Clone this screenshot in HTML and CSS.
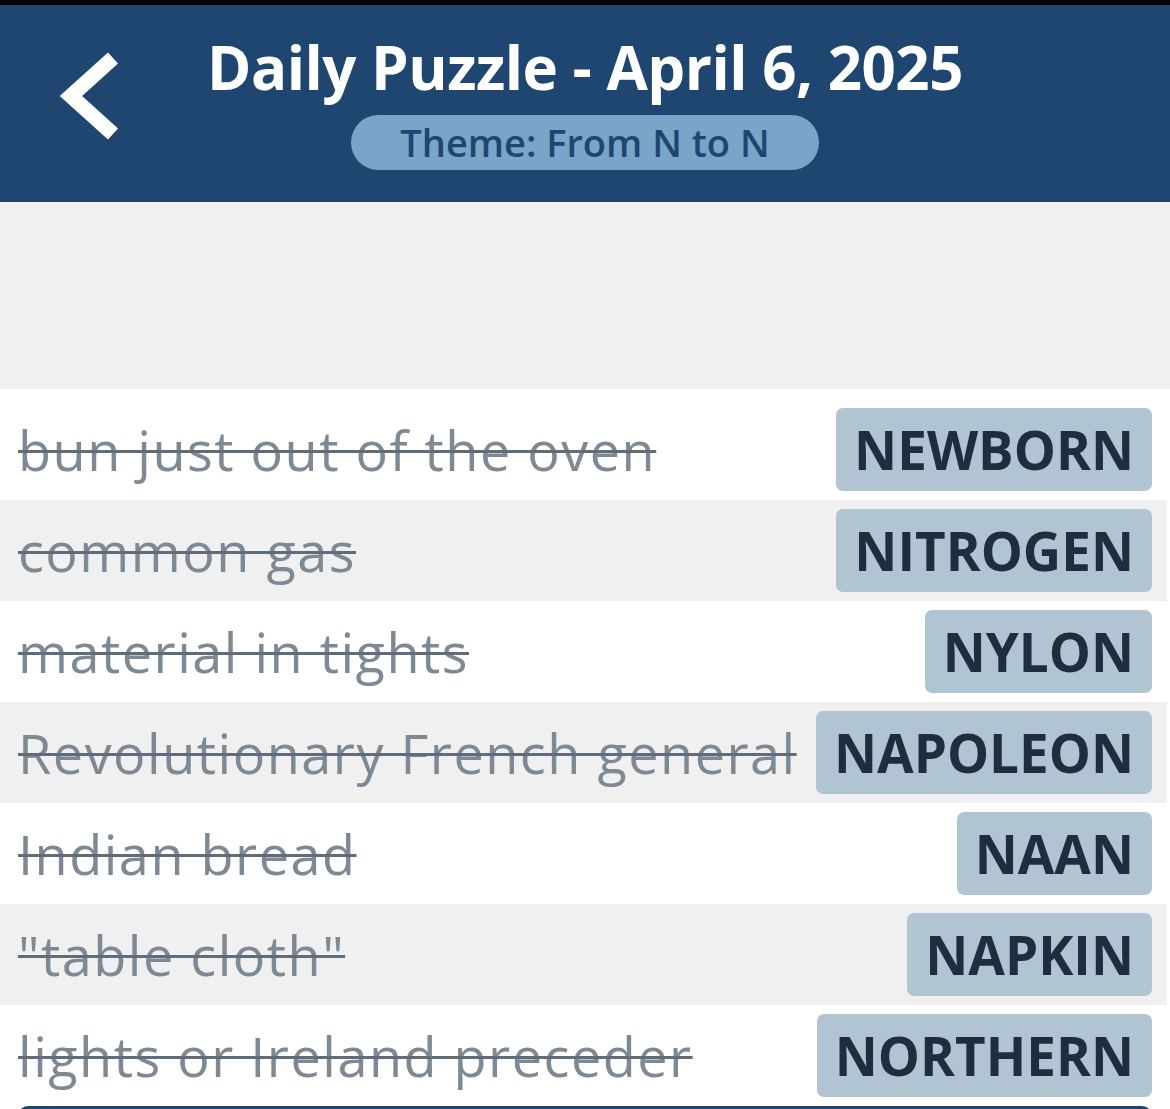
FILE: index.html
```html
<!DOCTYPE html>
<html lang="en">
<head>
<meta charset="UTF-8" />
<meta name="viewport" content="width=device-width, initial-scale=1" />
<title>Daily Puzzle - April 6, 2025</title>
<link rel="stylesheet" href="styles.css">
</head>
<body>
  <div class="status-bar"></div>
  <header class="top-bar">
    <button class="back-btn" aria-label="Back">
      <svg width="60" height="90" viewBox="0 0 60 90">
        <polyline points="53,7 11,45 53,83" fill="none" stroke="#fff" stroke-width="15" stroke-linejoin="miter" />
      </svg>
    </button>
    <div class="title-wrap">
      <h1>Daily Puzzle - April 6, 2025</h1>
      <div class="theme-pill">Theme: From N to N</div>
    </div>
  </header>

  <div class="spacer"></div>

  <ul class="clue-list">
    <li class="clue first"><span class="clue-text">bun just out of the oven</span><span class="answer">NEWBORN</span></li>
    <li class="clue alt"><span class="clue-text">common gas</span><span class="answer">NITROGEN</span></li>
    <li class="clue"><span class="clue-text">material in tights</span><span class="answer">NYLON</span></li>
    <li class="clue alt"><span class="clue-text">Revolutionary French general</span><span class="answer">NAPOLEON</span></li>
    <li class="clue"><span class="clue-text">Indian bread</span><span class="answer">NAAN</span></li>
    <li class="clue alt"><span class="clue-text">"table cloth"</span><span class="answer">NAPKIN</span></li>
    <li class="clue"><span class="clue-text">lights or Ireland preceder</span><span class="answer">NORTHERN</span></li>
  </ul>
  <div class="bottom-btn"></div>
</body>
</html>
```

FILE: styles.css
```css
body {
  margin: 0;
  background: #fff;
  font-family: 'Open Sans', 'Noto Sans', sans-serif;
  overflow: hidden;
}
.status-bar {
  height: 5px;
  background: #000;
}
.top-bar {
  background: #1f4670;
  height: 197px;
  position: relative;
  display: flex;
  justify-content: center;
}
.back-btn {
  position: absolute;
  left: 60px;
  top: 46px;
  background: none;
  border: none;
  padding: 0;
}
.title-wrap {
  display: flex;
  flex-direction: column;
  align-items: center;
  padding-top: 26px;
}
h1 {
  margin: 0;
  color: #fff;
  font-size: 60px;
  font-weight: 700;
  line-height: 72px;
  letter-spacing: -0.5px;
}
.theme-pill {
  margin-top: 12px;
  width: 468px;
  height: 55px;
  border-radius: 28px;
  background: #7aa4c8;
  color: #1f4670;
  font-size: 38px;
  font-weight: 600;
  line-height: 55px;
  text-align: center;
}
.spacer {
  height: 187px;
  background: #f0f0f0;
}
.clue-list {
  list-style: none;
  margin: 0 3px 0 0;
  padding: 0;
}
.clue {
  display: flex;
  align-items: center;
  justify-content: space-between;
  height: 101px;
  padding: 0 18px;
  box-sizing: border-box;
  background: #fff;
}
.clue.first {
  height: 111px;
  padding-top: 10px;
}
.clue.alt {
  background: #f0f0f0;
}
.clue-text {
  color: #7d8995;
  font-size: 54px;
  letter-spacing: 1.5px;
  white-space: nowrap;
  text-decoration: line-through;
  text-decoration-thickness: 3px;
  text-decoration-color: #5f6c79;
}
.answer {
  flex-shrink: 0;
  background: #b0c4d2;
  color: #1c2e40;
  font-size: 53px;
  font-weight: 700;
  height: 83px;
  line-height: 83px;
  padding: 0 18px;
  border-radius: 7px;
  margin-left: 10px;
  margin-right: -3px;
}
.bottom-btn {
  margin: 0 18px;
  height: 20px;
  background: #1f4670;
  border-radius: 10px 10px 0 0;
}
```
